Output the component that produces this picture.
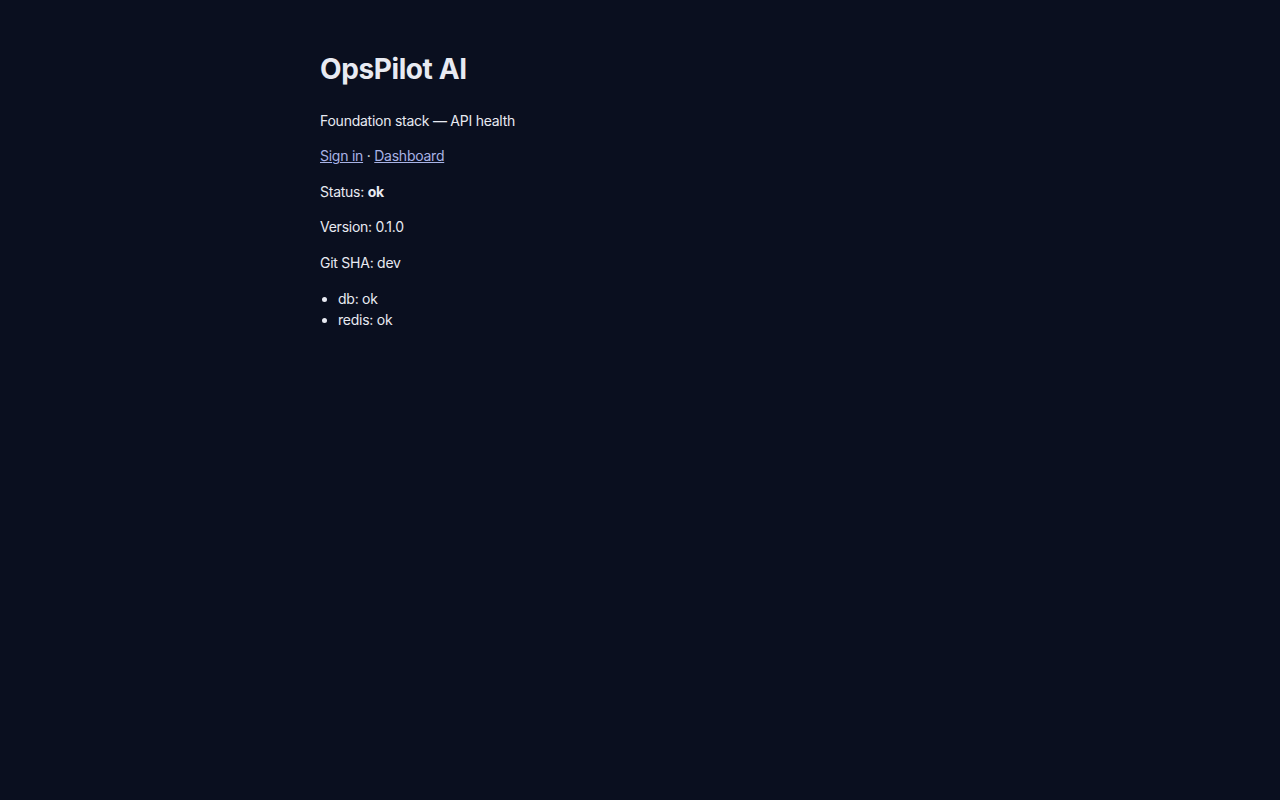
import React from 'react';

const App: React.FC = () => {
  return (
    <div className="min-h-screen bg-[#0a0f1f] text-[#e8eaf2] font-['Inter',sans-serif] text-[14px] leading-[21px] tracking-[-0.25px]">
      <main className="max-w-[640px] mx-auto pt-[29px]">
        <h1 className="text-[28px] font-bold leading-[42px] tracking-[-0.4px] mt-[18.76px] mb-[19.8px]">OpsPilot AI</h1>
        <p className="my-[14.5px]">Foundation stack — API health</p>
        <p className="my-[14.5px]">
          <a href="#" className="underline text-[#a9b3e6]">Sign in</a>
          {' · '}
          <a href="#" className="underline text-[#a9b3e6]">Dashboard</a>
        </p>
        <p className="my-[14.5px]">
          Status: <strong className="font-bold">ok</strong>
        </p>
        <p className="my-[14.5px]">Version: 0.1.0</p>
        <p className="my-[14.5px]">Git SHA: dev</p>
        <ul className="list-disc pl-[18px] mt-[15.5px] mb-[14.5px]">
          <li>db: ok</li>
          <li>redis: ok</li>
        </ul>
      </main>
    </div>
  );
};

export default App;
